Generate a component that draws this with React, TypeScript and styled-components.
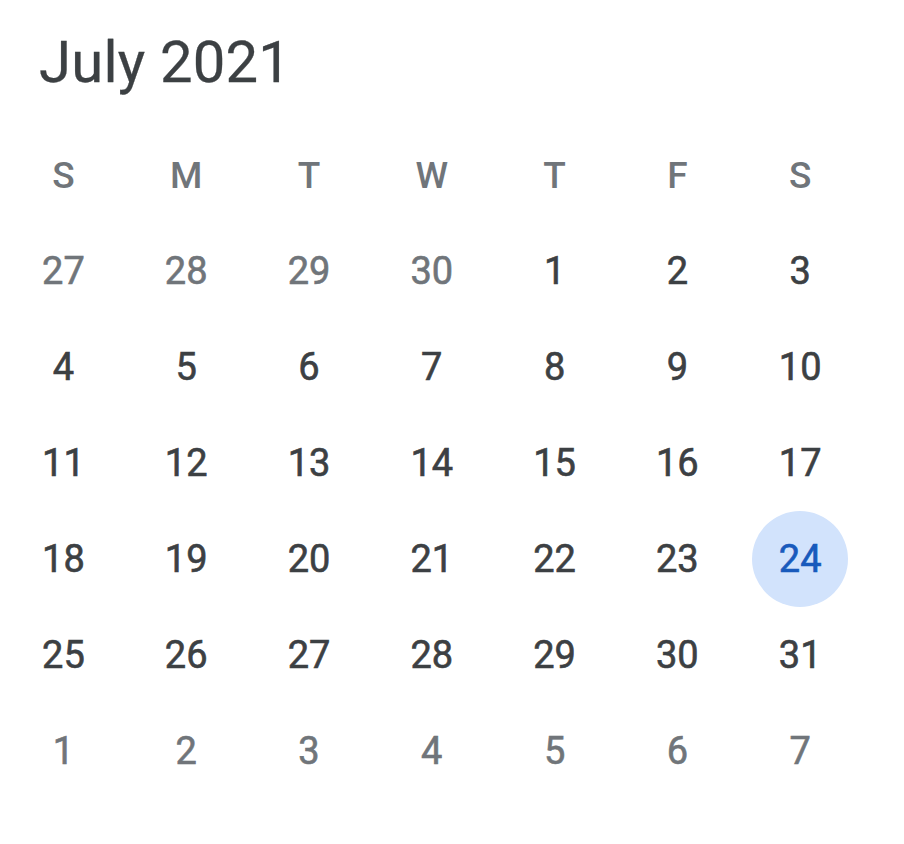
import React from "react";
import styled, { createGlobalStyle } from "styled-components";

const Global = createGlobalStyle`
  html, body { margin: 0; padding: 0; background: #fff; }
  body { font-family: Roboto, "Noto Sans", sans-serif; }
`;

const Page = styled.div`
  width: 904px;
  height: 844px;
  background: #fff;
  display: flex;
  flex-direction: column;
`;

const Title = styled.h1`
  margin: 0;
  padding: 24px 0 0 39px;
  height: 104px;
  box-sizing: border-box;
  font-family: Roboto, sans-serif;
  font-weight: 400;
  font-size: 58px;
  line-height: 76px;
  letter-spacing: 0.2px;
  color: #3c4043;
  -webkit-text-stroke: 0.3px currentColor;
`;

const Grid = styled.div`
  display: grid;
  grid-template-columns: repeat(7, 122.8px);
  grid-auto-rows: 96px;
  margin-left: 2px;
  margin-top: 23px;
`;

const Head = styled.div`
  display: flex;
  align-items: center;
  justify-content: center;
  font-family: Roboto, sans-serif;
  font-weight: 500;
  font-size: 37px;
  color: #70757a;
`;

const Day = styled.div<{ $muted?: boolean; $today?: boolean }>`
  display: flex;
  align-items: center;
  justify-content: center;
  font-family: Roboto, sans-serif;
  font-size: 38px;
  font-weight: 400;
  -webkit-text-stroke: 0.6px currentColor;
  color: ${(p) => (p.$today ? "#185abc" : p.$muted ? "#70757a" : "#3c4043")};
`;

const Circle = styled.span`
  width: 96px;
  height: 96px;
  border-radius: 50%;
  background: #d2e3fc;
  display: flex;
  align-items: center;
  justify-content: center;
`;

const heads = ["S", "M", "T", "W", "T", "F", "S"];

type Cell = { n: number; muted?: boolean };
const cells: Cell[] = [];
[27, 28, 29, 30].forEach((n) => cells.push({ n, muted: true }));
for (let i = 1; i <= 31; i++) cells.push({ n: i });
for (let i = 1; i <= 7; i++) cells.push({ n: i, muted: true });

export default function App() {
  return (
    <Page>
      <Global />
      <Title>July 2021</Title>
      <Grid>
        {heads.map((h, i) => (
          <Head key={"h" + i}>{h}</Head>
        ))}
        {cells.map((c, i) => {
          const today = !c.muted && c.n === 24;
          return (
            <Day key={i} $muted={c.muted} $today={today}>
              {today ? <Circle>{c.n}</Circle> : c.n}
            </Day>
          );
        })}
      </Grid>
    </Page>
  );
}
